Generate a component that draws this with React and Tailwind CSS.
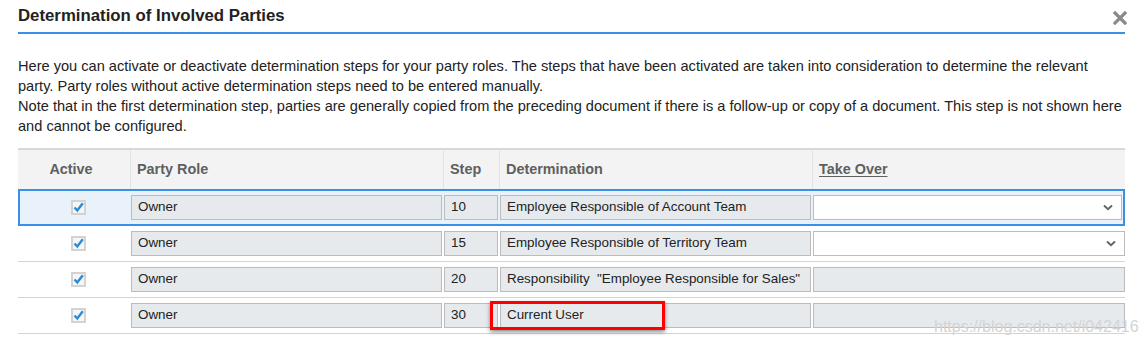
import React from "react";

const rows = [
  { step: "10", det: "Employee Responsible of Account Team", take: "select", selected: true },
  { step: "15", det: "Employee Responsible of Territory Team", take: "select" },
  { step: "20", det: 'Responsibility  "Employee Responsible for Sales"', take: "disabled" },
  { step: "30", det: "Current User", take: "disabled" },
];

const Check = () => (
  <svg width="15" height="15" viewBox="0 0 15 15">
    <rect x="0" y="0" width="15" height="15" fill="#d3d3d3" />
    <rect x="2" y="2" width="11" height="11" fill="#f4f6f8" />
    <path d="M3.5 7.5 L6.3 10.5 L11.8 3.2" fill="none" stroke="#2b8ad4" strokeWidth="2.4" strokeLinejoin="miter" />
  </svg>
);

const Chevron = () => (
  <svg width="10" height="7" viewBox="0 0 10 7">
    <path d="M1 1.5 L5 5.2 L9 1.5" fill="none" stroke="#666" strokeWidth="2" />
  </svg>
);

const Field = ({ children }) => (
  <div className="h-[25px] w-full border border-[#bcbcbc] bg-[#e7eaed] px-[6px] flex items-center text-[13.4px] text-[#222] whitespace-pre overflow-hidden">
    {children}
  </div>
);

const cols = "grid grid-cols-[112px_313px_56px_313px_313px]";

export default function App() {
  return (
    <div className="relative w-[1145px] h-[345px] bg-white overflow-hidden" style={{ fontFamily: '"Liberation Sans", Arial, sans-serif' }}>
      <div className="px-[18px] pr-[20px]">
        <div className="flex items-end justify-between h-[34px] border-b-2 border-[#3a8fe8]">
          <div className="text-[16.8px] font-bold text-[#222] pb-[4px]">Determination of Involved Parties</div>
        </div>
        <div className="mt-[22px] text-[14.6px] leading-[20px] text-[#222]">
          <div className="whitespace-nowrap">Here you can activate or deactivate determination steps for your party roles. The steps that have been activated are taken into consideration to determine the relevant</div>
          <div className="whitespace-nowrap">party. Party roles without active determination steps need to be entered manually.</div>
          <div className="whitespace-nowrap">Note that in the first determination step, parties are generally copied from the preceding document if there is a follow-up or copy of a document. This step is not shown here</div>
          <div className="whitespace-nowrap">and cannot be configured.</div>
        </div>

        <div className="mt-[12px] border-t-2 border-[#d8d8d8]">
          <div className={`${cols} h-[39px] bg-[#f3f3f3] text-[14.4px] font-bold text-[#5f5f5f]`}>
            <div className="flex items-center justify-center pr-[6px]">Active</div>
            <div className="flex items-center pl-[6px] border-l border-[#e2e2e2]">Party Role</div>
            <div className="flex items-center pl-[6px] border-l border-[#e2e2e2]">Step</div>
            <div className="flex items-center pl-[6px] border-l border-[#e2e2e2]">Determination</div>
            <div className="flex items-center pl-[6px] border-l border-[#e2e2e2]"><span className="underline underline-offset-2">Take Over</span></div>
          </div>
          {rows.map((r, i) => (
            <div
              key={i}
              className={`${cols} ${r.selected ? "h-[37px] outline-2 outline-[#3a8fe8] -outline-offset-2 bg-[#e9f1fa]" : "h-[36px] border-b border-[#d4d4d4]"}`}
            >
              <div className="flex items-center justify-center pl-[8px]"><Check /></div>
              <div className="flex items-center px-px"><Field>Owner</Field></div>
              <div className="flex items-center px-px"><Field>{r.step}</Field></div>
              <div className="flex items-center px-px"><Field>{r.det}</Field></div>
              <div className={`flex items-center pl-px ${r.selected ? "pr-[3px]" : ""}`}>
                {r.take === "select" ? (
                  <div className="h-[25px] w-full border border-[#bcbcbc] bg-white flex items-center justify-end pr-[8px]">
                    <Chevron />
                  </div>
                ) : (
                  <Field />
                )}
              </div>
            </div>
          ))}
        </div>
      </div>

      <svg className="absolute left-[1113px] top-[11px]" width="14" height="14" viewBox="0 0 14 14">
        <path d="M2 2 L12 12 M12 2 L2 12" stroke="#8a8a8a" strokeWidth="3.2" strokeLinecap="square" />
      </svg>

      <div className="absolute left-[490px] top-[301px] w-[175px] h-[29px] border-[3px] border-[#ff0000] shadow-[0_2px_4px_rgba(0,0,0,0.45)]" />

      <div className="absolute left-[934px] top-[315px] text-[16px] text-[#d4d4d4] whitespace-nowrap">https://blog.csdn.net/i042416</div>
    </div>
  );
}
